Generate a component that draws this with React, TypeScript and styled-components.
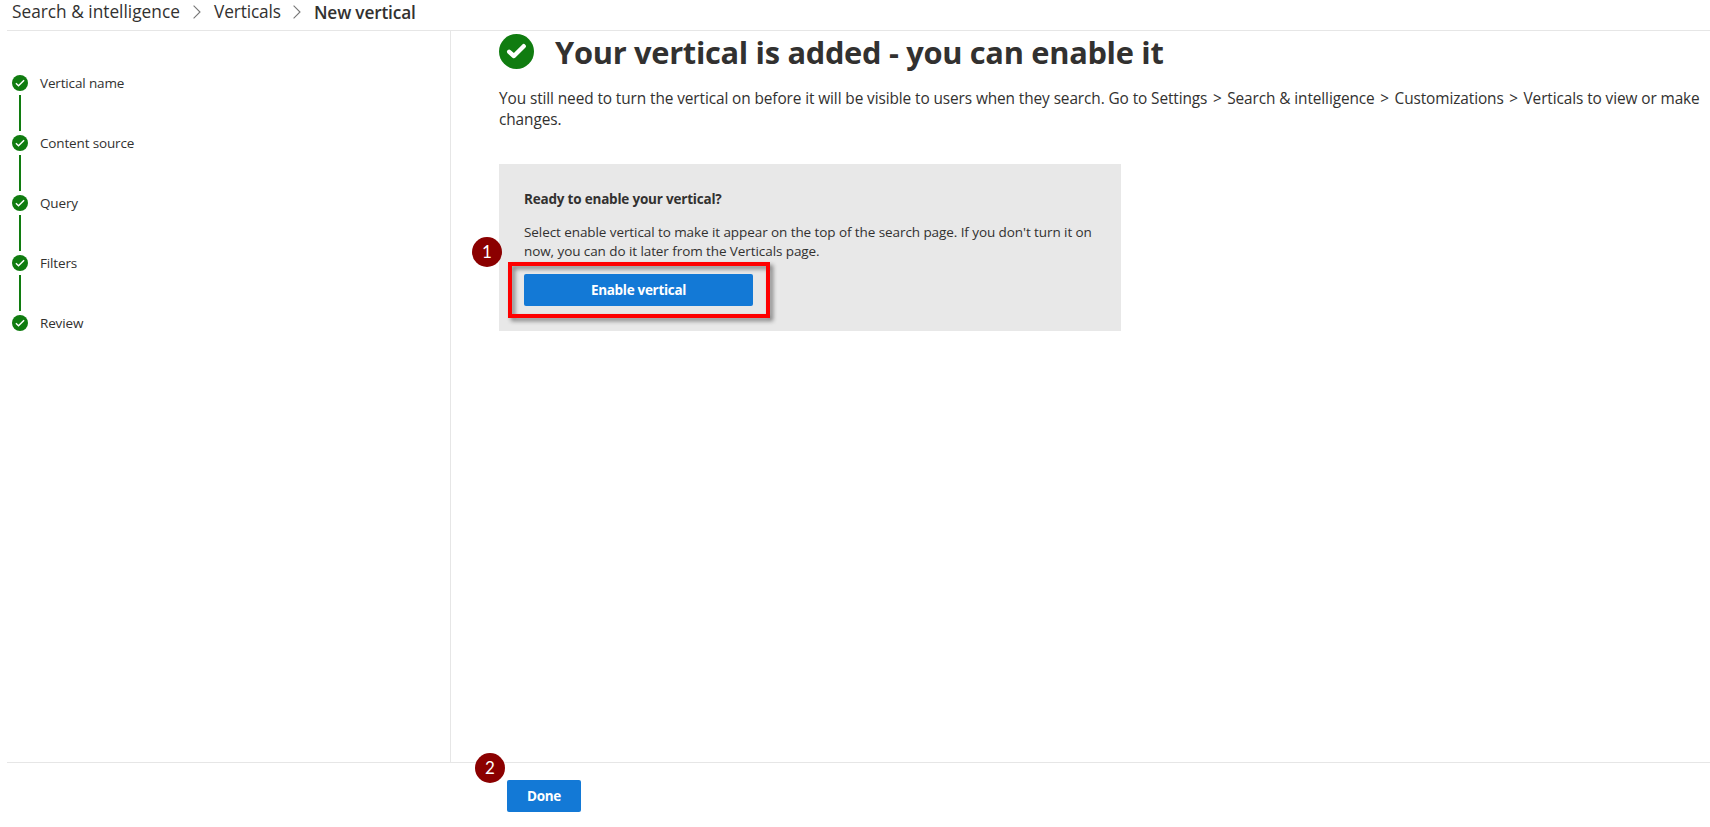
import React from "react";
import styled, { createGlobalStyle } from "styled-components";

const GlobalStyle = createGlobalStyle`
  * { box-sizing: border-box; }
  body {
    margin: 0;
    background: #fff;
    color: #323130;
    font-family: "Segoe UI", "Open Sans", "Noto Sans", sans-serif;
  }
`;

const Page = styled.div`
  height: 100vh;
  padding-left: 7px;
  display: flex;
  flex-direction: column;
  overflow: hidden;
`;

const Breadcrumb = styled.nav`
  height: 31px;
  flex: none;
  display: flex;
  align-items: flex-start;
  padding-left: 5px;
  border-bottom: 1px solid #e6e6e6;
`;

const Crumb = styled.span<{ $width: number; $current?: boolean; $spacing: number }>`
  width: ${(p) => p.$width}px;
  font-size: 17.3px;
  line-height: 24px;
  padding-top: ${(p) => (p.$current ? 1 : 0)}px;
  font-weight: ${(p) => (p.$current ? 600 : 400)};
  letter-spacing: ${(p) => p.$spacing}px;
  white-space: nowrap;
`;

const CrumbArrow = styled.svg`
  width: 8px;
  height: 14px;
  margin: 5px 13px 0 12px;
`;

const Body = styled.div`
  flex: 1;
  display: flex;
  min-height: 0;
`;

const Sidebar = styled.aside`
  width: 444px;
  flex: none;
  padding: 44px 0 0 5px;
  border-right: 1px solid #e6e6e6;
`;

const Step = styled.div`
  display: flex;
  gap: 12px;
  height: 60px;
`;

const StepRail = styled.div`
  width: 16px;
  display: flex;
  flex-direction: column;
  align-items: center;
  gap: 4px;
`;

const StepLine = styled.div`
  width: 2px;
  height: 36px;
  background: #107c10;
`;

const StepLabel = styled.span`
  font-size: 13.5px;
  line-height: 16px;
  letter-spacing: -0.15px;
`;

const Main = styled.main`
  flex: 1;
  padding: 3px 0 0 48px;
`;

const TitleRow = styled.div`
  display: flex;
  gap: 21px;
`;

const Title = styled.h1`
  margin: 0;
  font-size: 30.8px;
  line-height: 36px;
  height: 40px;
  font-weight: 700;
  letter-spacing: -0.3px;
  white-space: nowrap;
`;

const Intro = styled.p`
  margin: 14px 0 0;
  font-size: 15.4px;
  line-height: 21px;
  letter-spacing: -0.1px;
  white-space: nowrap;
`;

const PathSeparator = styled.span`
  margin: 0 1.7px;
`;

const Card = styled.section`
  position: relative;
  width: 622px;
  height: 167px;
  margin-top: 34px;
  padding: 26px 25px 0;
  background: #e8e8e8;
`;

const CardTitle = styled.h2`
  margin: 0;
  font-size: 13.5px;
  line-height: 19px;
  font-weight: 700;
  letter-spacing: -0.2px;
`;

const CardText = styled.p`
  margin: 14px 0 13px;
  font-size: 13.5px;
  line-height: 19px;
  letter-spacing: -0.08px;
  white-space: nowrap;
`;

const Button = styled.button<{ $width: number }>`
  display: block;
  width: ${(p) => p.$width}px;
  height: 32px;
  padding: 0;
  border: 0;
  border-radius: 2px;
  background: #1379d6;
  color: #fff;
  font: 700 13.5px/32px "Segoe UI", "Open Sans", "Noto Sans", sans-serif;
  letter-spacing: -0.3px;
  text-align: center;
`;

const Highlight = styled.div`
  position: absolute;
  left: 9px;
  top: 98px;
  width: 262px;
  height: 56px;
  border: 4px solid #fe0000;
  filter: drop-shadow(3px 3px 2px rgba(0, 0, 0, 0.45));
`;

const Marker = styled.span<{ $left: number; $top: number }>`
  position: absolute;
  left: ${(p) => p.$left}px;
  top: ${(p) => p.$top}px;
  width: 30px;
  height: 30px;
  border-radius: 50%;
  background: #8b0000;
  color: #fff;
  font: 400 17px/29px Lato, sans-serif;
  text-align: center;
`;

const Footer = styled.footer`
  position: relative;
  flex: none;
  height: 65px;
  padding: 17px 0 0 500px;
  border-top: 1px solid #e6e6e6;
`;

const Circle = styled.svg`
  display: block;
  flex: none;
`;

const StepCheck = () => (
  <Circle width="16" height="16" viewBox="0 0 16 16">
    <circle cx="8" cy="8" r="8" fill="#107c10" />
    <path d="M3.9 8.3 6.5 10.7 12.1 5.2" fill="none" stroke="#fff" strokeWidth="1.5" />
  </Circle>
);

const TitleCheck = () => (
  <Circle width="35" height="35" viewBox="0 0 35 35">
    <circle cx="17.5" cy="17.5" r="17.5" fill="#107c10" />
    <path
      d="M10.2 17.8 14.9 22 24.7 12.2"
      fill="none"
      stroke="#fff"
      strokeWidth="4.4"
      strokeLinecap="round"
      strokeLinejoin="round"
    />
  </Circle>
);

const Arrow = () => (
  <CrumbArrow viewBox="0 0 8 14">
    <path d="M0.6 0.6 7 7 0.6 13.4" fill="none" stroke="#777" strokeWidth="1.1" />
  </CrumbArrow>
);

const steps = ["Vertical name", "Content source", "Query", "Filters", "Review"];

export default function App() {
  return (
    <>
      <GlobalStyle />
      <Page>
        <Breadcrumb>
          <Crumb $width={169} $spacing={0}>Search &amp; intelligence</Crumb>
          <Arrow />
          <Crumb $width={67} $spacing={-0.14}>Verticals</Crumb>
          <Arrow />
          <Crumb $width={102} $spacing={-0.18} $current>New vertical</Crumb>
        </Breadcrumb>
        <Body>
          <Sidebar>
            {steps.map((label, i) => (
              <Step key={label}>
                <StepRail>
                  <StepCheck />
                  {i < steps.length - 1 && <StepLine />}
                </StepRail>
                <StepLabel>{label}</StepLabel>
              </Step>
            ))}
          </Sidebar>
          <Main>
            <TitleRow>
              <TitleCheck />
              <Title>Your vertical is added - you can enable it</Title>
            </TitleRow>
            <Intro>
              You still need to turn the vertical on before it will be visible to users when they search. Go to
              Settings <PathSeparator>&gt;</PathSeparator> Search &amp; intelligence{" "}
              <PathSeparator>&gt;</PathSeparator> Customizations <PathSeparator>&gt;</PathSeparator> Verticals to
              view or make
              <br />
              changes.
            </Intro>
            <Card>
              <CardTitle>Ready to enable your vertical?</CardTitle>
              <CardText>
                Select enable vertical to make it appear on the top of the search page. If you don't turn it on
                <br />
                now, you can do it later from the Verticals page.
              </CardText>
              <Button $width={229}>Enable vertical</Button>
              <Highlight />
              <Marker $left={-27} $top={73}>1</Marker>
            </Card>
          </Main>
        </Body>
        <Footer>
          <Button $width={74}>Done</Button>
          <Marker $left={468} $top={-10}>2</Marker>
        </Footer>
      </Page>
    </>
  );
}
